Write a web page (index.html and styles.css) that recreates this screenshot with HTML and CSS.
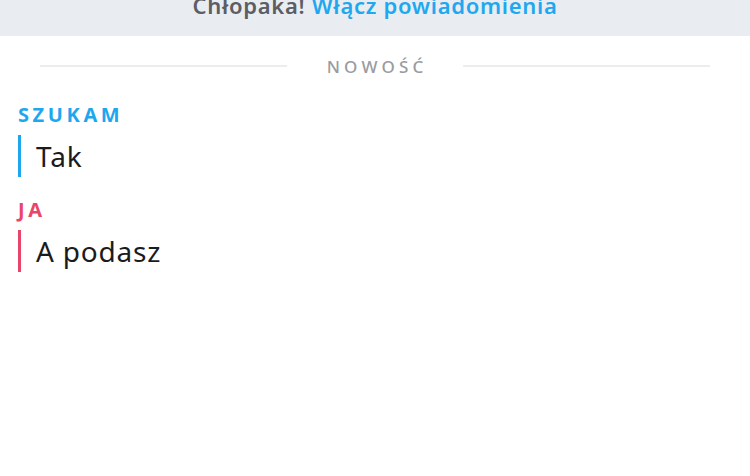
FILE: index.html
```html
<!DOCTYPE html>
<html lang="pl">
<head>
  <meta charset="UTF-8">
  <meta name="viewport" content="width=device-width, initial-scale=1.0">
  <title>Czat</title>
  <link rel="stylesheet" href="styles.css">
</head>
<body>
  <!-- Notification banner -->
  <div class="banner">
    <p>Chłopaka! <span class="link">Włącz powiadomienia</span></p>
  </div>

  <!-- Divider -->
  <div class="divider">
    <span class="line"></span>
    <span class="divider-text">NOWOŚĆ</span>
    <span class="line"></span>
  </div>

  <!-- Messages -->
  <div class="messages">
    <div class="message them">
      <h3>SZUKAM</h3>
      <p>Tak</p>
    </div>
    <div class="message me">
      <h3>JA</h3>
      <p>A podasz</p>
    </div>
  </div>
</body>
</html>
```

FILE: styles.css
```css
* {
  margin: 0;
  padding: 0;
  box-sizing: border-box;
  font-family: 'Noto Sans', 'Open Sans', sans-serif;
}

body {
  background: #fff;
  width: 750px;
  height: 476px;
  overflow: hidden;
}

.banner {
  background: #e9edf1;
  height: 36px;
  overflow: hidden;
  text-align: center;
}

.banner p {
  margin-top: -10px;
  font-size: 22px;
  font-weight: 600;
  line-height: 30px;
  letter-spacing: 0.7px;
  color: #5b5e66;
}

.banner .link {
  color: #1fa8f0;
}

.divider {
  display: flex;
  align-items: center;
  gap: 40px;
  padding: 0 40px;
  margin-top: 19px;
  height: 22px;
}

.line {
  flex: 1;
  height: 2px;
  background: #ececee;
}

.divider-text {
  font-size: 17px;
  font-weight: 500;
  letter-spacing: 4.2px;
  margin-right: -4.2px;
  color: #9a9ba1;
}

.messages {
  padding: 0 18px;
  margin-top: 26px;
}

.message {
  margin-bottom: 21px;
}

.message h3 {
  font-size: 20px;
  font-weight: 700;
  letter-spacing: 3.6px;
  line-height: 24px;
}

.message p {
  margin-top: 8px;
  border-left: 3px solid;
  padding-left: 15px;
  font-size: 28px;
  line-height: 42px;
  letter-spacing: 0.8px;
  color: #1b1b1d;
}

.them h3 {
  color: #1ea7ef;
}

.them p {
  border-color: #1ea7ef;
}

.me h3 {
  color: #e9446a;
}

.me p {
  border-color: #e9446a;
}
```
